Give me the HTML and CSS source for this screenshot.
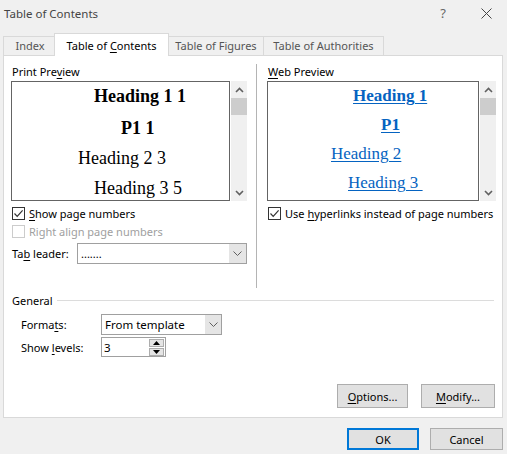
FILE: index.html
```html
<!DOCTYPE html>
<html>
<head>
    <title>Table of Contents</title>
    <link rel="stylesheet" href="styles.css">
</head>
<body>
    <div class="dialog">
        <div class="titlebar">
            <span class="title">Table of Contents</span>
            <span class="help">?</span>
            <svg class="close" width="11" height="11" viewBox="0 0 11 11"><path d="M0.5 0.5 L10.5 10.5 M10.5 0.5 L0.5 10.5" stroke="#444" stroke-width="1" fill="none"/></svg>
        </div>

        <div class="tabs">
            <div class="tab tab-index">Index</div>
            <div class="tab tab-active">Table of <u>C</u>ontents</div>
            <div class="tab tab-figures">Table of Figures</div>
            <div class="tab tab-authorities">Table of Authorities</div>
        </div>

        <div class="panel">
            <div class="previews">
                <div class="column left-col">
                    <div class="label">Print Pre<u>v</u>iew</div>
                    <div class="preview-wrap">
                        <div class="preview print-preview">
                            <div class="line bold" style="margin-left: 82px;">Heading 1 1</div>
                            <div class="line bold" style="margin-left: 109px;">P1 1</div>
                            <div class="line" style="margin-left: 66px;">Heading 2 3</div>
                            <div class="line" style="margin-left: 82px;">Heading 3 5</div>
                        </div>
                        <div class="scrollbar">
                            <div class="arrow"><svg width="9" height="6" viewBox="0 0 9 6"><path d="M1 5 L4.5 1.5 L8 5" fill="none" stroke="#606060" stroke-width="1.6"/></svg></div>
                            <div class="thumb"></div>
                            <div class="track"></div>
                            <div class="arrow"><svg width="9" height="6" viewBox="0 0 9 6"><path d="M1 1 L4.5 4.5 L8 1" fill="none" stroke="#606060" stroke-width="1.6"/></svg></div>
                        </div>
                    </div>
                    <div class="check-row first-check">
                        <span class="checkbox"><svg width="11" height="11" viewBox="0 0 11 11"><path d="M1.5 5.5 L4.2 8.3 L9.6 2.4" fill="none" stroke="#333" stroke-width="1.2"/></svg></span>
                        <span><u>S</u>how page numbers</span>
                    </div>
                    <div class="check-row disabled">
                        <span class="checkbox"></span>
                        <span>Right align page numbers</span>
                    </div>
                    <div class="field-row leader-row">
                        <span class="leader-label">Ta<u>b</u> leader:</span>
                        <div class="select leader-select">
                            <span class="select-value">.......</span>
                            <span class="select-btn"><svg width="9" height="5" viewBox="0 0 9 5"><path d="M0.5 0.5 L4.5 4.5 L8.5 0.5" fill="none" stroke="#606060" stroke-width="1"/></svg></span>
                        </div>
                    </div>
                </div>

                <div class="divider"></div>

                <div class="column right-col">
                    <div class="label"><u>W</u>eb Preview</div>
                    <div class="preview-wrap">
                        <div class="preview web-preview">
                            <div class="line bold" style="margin-left: 85px;"><span class="link">Heading 1</span></div>
                            <div class="line bold" style="margin-left: 113px;"><span class="link">P1</span></div>
                            <div class="line" style="margin-left: 63px;"><span class="link">Heading 2</span></div>
                            <div class="line" style="margin-left: 80px;"><span class="link">Heading 3&nbsp;</span></div>
                        </div>
                        <div class="scrollbar">
                            <div class="arrow"><svg width="9" height="6" viewBox="0 0 9 6"><path d="M1 5 L4.5 1.5 L8 5" fill="none" stroke="#606060" stroke-width="1.6"/></svg></div>
                            <div class="thumb"></div>
                            <div class="track"></div>
                            <div class="arrow"><svg width="9" height="6" viewBox="0 0 9 6"><path d="M1 1 L4.5 4.5 L8 1" fill="none" stroke="#606060" stroke-width="1.6"/></svg></div>
                        </div>
                    </div>
                    <div class="check-row first-check">
                        <span class="checkbox"><svg width="11" height="11" viewBox="0 0 11 11"><path d="M1.5 5.5 L4.2 8.3 L9.6 2.4" fill="none" stroke="#333" stroke-width="1.2"/></svg></span>
                        <span>Use <u>h</u>yperlinks instead of page numbers</span>
                    </div>
                </div>
            </div>

            <div class="general">
                <span>General</span>
                <div class="general-line"></div>
            </div>

            <div class="field-row formats-row">
                <span class="field-label">Forma<u>t</u>s:</span>
                <div class="select formats-select">
                    <span class="select-value">From template</span>
                    <span class="select-btn"><svg width="9" height="5" viewBox="0 0 9 5"><path d="M0.5 0.5 L4.5 4.5 L8.5 0.5" fill="none" stroke="#606060" stroke-width="1"/></svg></span>
                </div>
            </div>
            <div class="field-row levels-row">
                <span class="field-label">Show <u>l</u>evels:</span>
                <div class="spinner">
                    <span class="select-value">3</span>
                    <div class="spin-btns">
                        <span class="spin-btn"><svg width="7" height="4" viewBox="0 0 7 4"><path d="M0 4 L3.5 0 L7 4 Z" fill="#000"/></svg></span>
                        <span class="spin-btn"><svg width="7" height="4" viewBox="0 0 7 4"><path d="M0 0 L3.5 4 L7 0 Z" fill="#000"/></svg></span>
                    </div>
                </div>
            </div>

            <div class="panel-buttons">
                <div class="button options-button"><u>O</u>ptions...</div>
                <div class="button modify-button"><u>M</u>odify...</div>
            </div>
        </div>

        <div class="footer">
            <div class="button ok-button">OK</div>
            <div class="button cancel-button">Cancel</div>
        </div>
    </div>
</body>
</html>
```

FILE: styles.css
```css
body {
    margin: 0;
    padding: 0;
    background-color: #f0f0f0;
    font-family: "Noto Sans", sans-serif;
    font-size: 11px;
    color: #000;
}
u {
    text-decoration: underline;
    text-underline-offset: 2px;
}
.dialog {
    width: 507px;
    height: 454px;
    overflow: hidden;
}
.titlebar {
    height: 26px;
    display: flex;
    align-items: center;
    padding-left: 4px;
}
.title {
    font-size: 11.5px;
    color: #444;
    flex-grow: 1;
}
.help {
    font-size: 13px;
    color: #666;
    margin-right: 35px;
}
.close {
    margin-right: 15px;
}

/* tabs */
.tabs {
    display: flex;
    align-items: flex-end;
    height: 22px;
    margin: 7px 4px 0 3px;
    border-bottom: 1px solid #d9d9d9;
}
.tab {
    box-sizing: border-box;
    height: 19px;
    line-height: 18px;
    text-align: center;
    border: 1px solid #d9d9d9;
    border-bottom: none;
    color: #555;
    background-color: #f0f0f0;
}
.tab-index {
    width: 52px;
    padding-left: 2px;
}
.tab-active {
    width: 115px;
    height: 23px;
    margin-left: -1px;
    margin-bottom: -1px;
    padding-top: 3px;
    background-color: #fff;
    color: #000;
}
.tab-figures {
    width: 96px;
    margin-left: -1px;
}
.tab-authorities {
    width: 121px;
    margin-left: -1px;
}

/* panel */
.panel {
    box-sizing: border-box;
    height: 362px;
    margin: 0 4px 0 3px;
    border: 1px solid #d9d9d9;
    border-top: none;
    background-color: #fff;
    display: flex;
    flex-direction: column;
    padding: 9px 6px 9px 7px;
}
.previews {
    display: flex;
    height: 223px;
}
.column {
    display: flex;
    flex-direction: column;
}
.left-col {
    width: 236px;
}
.right-col {
    width: 229px;
}
.divider {
    width: 1px;
    margin: -1px 10px 0 9px;
    background-color: #b4b4b4;
}
.label {
    height: 16px;
    line-height: 14px;
    padding-left: 1px;
}
.preview-wrap {
    display: flex;
    height: 120px;
}
.preview {
    box-sizing: border-box;
    flex-grow: 1;
    border: 1px solid #646464;
    font-family: "Liberation Serif", serif;
    overflow: hidden;
    white-space: nowrap;
}
.print-preview .line {
    font-size: 18px;
    line-height: 30px;
}
.print-preview .line:first-child {
    margin-top: -1px;
    margin-bottom: 2px;
}
.web-preview .line {
    font-size: 17px;
    line-height: 29px;
}
.web-preview .line:first-child {
    margin-top: -1px;
}
.bold {
    font-weight: bold;
}
.link {
    color: #0563c1;
    text-decoration: underline;
    text-underline-offset: 2px;
}
.scrollbar {
    width: 16px;
    margin-left: 1px;
    background-color: #f0f0f0;
    display: flex;
    flex-direction: column;
}
.scrollbar .arrow {
    height: 17px;
    display: flex;
    align-items: center;
    justify-content: center;
}
.scrollbar .thumb {
    height: 17px;
    background-color: #cdcdcd;
}
.scrollbar .track {
    flex-grow: 1;
}

/* checkboxes */
.check-row {
    display: flex;
    align-items: center;
    height: 18px;
    padding-left: 1px;
}
.first-check {
    margin-top: 3px;
}
.checkbox {
    box-sizing: border-box;
    width: 13px;
    height: 13px;
    border: 1px solid #333;
    background-color: #fff;
    margin-right: 4px;
    display: flex;
    align-items: center;
    justify-content: center;
}
.disabled {
    color: #a0a0a0;
}
.disabled .checkbox {
    border-color: #cccccc;
}

/* fields */
.field-row {
    display: flex;
    align-items: center;
}
.leader-row {
    margin-top: 3px;
    padding-left: 1px;
}
.leader-label {
    width: 65px;
}
.select {
    box-sizing: border-box;
    display: flex;
    align-items: stretch;
    border: 1px solid #a0a0a0;
    background-color: #fff;
}
.select-value {
    flex-grow: 1;
    padding-left: 3px;
    display: flex;
    align-items: center;
}
.select-btn {
    width: 17px;
    background-color: #e5e5e5;
    display: flex;
    align-items: center;
    justify-content: center;
}
.leader-select {
    width: 170px;
    height: 21px;
}
.general {
    display: flex;
    align-items: center;
    height: 16px;
    margin-top: 4px;
    padding-left: 1px;
}
.general-line {
    flex-grow: 1;
    height: 1px;
    margin: 0 2px 0 4px;
    background-color: #dcdcdc;
}
.formats-row {
    margin-top: 6px;
    padding-left: 10px;
}
.levels-row {
    margin-top: 2px;
    padding-left: 10px;
}
.field-label {
    width: 80px;
}
.formats-select {
    width: 121px;
    height: 21px;
    font-size: 11.5px;
}
.formats-select .select-btn {
    width: 16px;
}
.spinner {
    box-sizing: border-box;
    width: 65px;
    height: 20px;
    border: 1px solid #a0a0a0;
    display: flex;
    align-items: stretch;
}
.spinner .select-value {
    padding-left: 2px;
    font-size: 11.5px;
}
.spin-btns {
    display: flex;
    flex-direction: column;
    justify-content: center;
    padding-right: 1px;
}
.spin-btn {
    box-sizing: border-box;
    width: 15px;
    height: 8px;
    border: 1px solid #adadad;
    background-color: #e5e5e5;
    display: flex;
    align-items: center;
    justify-content: center;
}
.spin-btn + .spin-btn {
    margin-top: 1px;
}

/* buttons */
.panel-buttons {
    margin-top: auto;
    display: flex;
    justify-content: flex-end;
    gap: 13px;
    padding-right: 1px;
}
.button {
    box-sizing: border-box;
    height: 24px;
    border: 1px solid #adadad;
    background-color: #e1e1e1;
    display: flex;
    align-items: center;
    justify-content: center;
}
.options-button {
    width: 71px;
}
.modify-button {
    width: 74px;
}
.footer {
    display: flex;
    justify-content: flex-end;
    gap: 11px;
    padding: 10px 4px 0 0;
}
.ok-button {
    width: 72px;
    height: 22px;
    border: 2px solid #0078d7;
}
.cancel-button {
    width: 73px;
    height: 22px;
}
```
